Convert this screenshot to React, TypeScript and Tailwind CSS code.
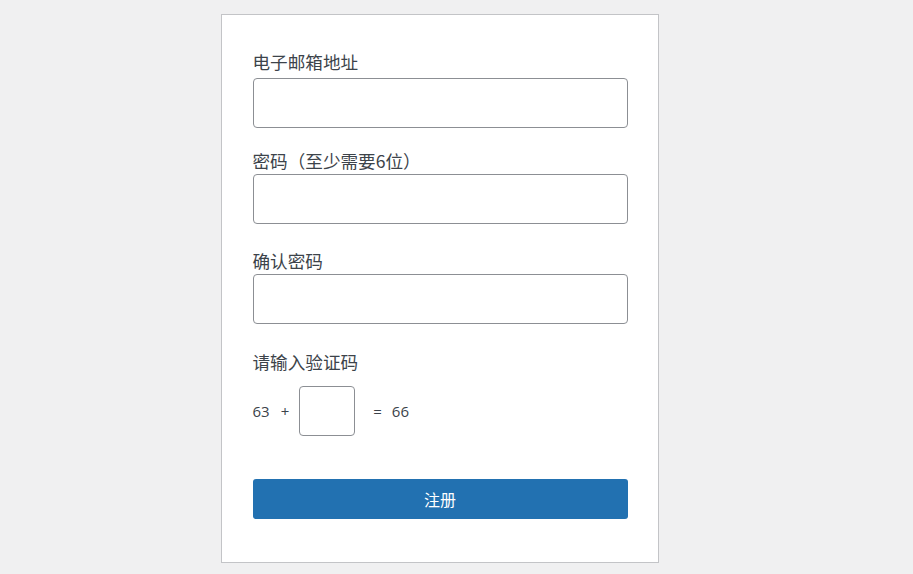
import React from "react";

const labelCls =
  "block text-[17.6px] leading-[27px] text-[#3c434a] font-['Noto_Sans_CJK_SC','Noto_Sans',sans-serif]";
const inputCls =
  "block w-[375px] h-[50px] rounded-[4px] border border-[#8c8f94] bg-white";

export default function App() {
  return (
    <div className="min-h-[574px] w-full bg-[#f0f0f1] flex justify-center pr-[34px] pt-[14px] font-['Noto_Sans','Noto_Sans_CJK_SC',sans-serif]">
      <div className="w-[438px] h-[549px] bg-white border border-[#c3c4c7] pl-[31px] pt-[33px] flex flex-col">
        <label className={labelCls}>电子邮箱地址</label>
        <input type="email" className={`${inputCls} mt-[3px]`} />

        <label className={`${labelCls} mt-[19px]`}>密码（至少需要6位）</label>
        <input type="password" className={`${inputCls} mt-0`} />

        <label className={`${labelCls} mt-[23px]`}>确认密码</label>
        <input type="password" className={`${inputCls} mt-0`} />

        <label className={`${labelCls} mt-[24px]`}>请输入验证码</label>
        <div className="mt-[11px] flex items-center text-[15px] text-[#3c434a] font-['Open_Sans','Noto_Sans',sans-serif]">
          <span>63</span>
          <span className="ml-[11px]">+</span>
          <input type="text" className="ml-[10px] w-[56px] h-[50px] rounded-[4px] border border-[#8c8f94] bg-white" />
          <span className="ml-[18px]">=</span>
          <span className="ml-[10px]">66</span>
        </div>

        <button className="mt-[43px] w-[375px] h-[40px] rounded-[3px] bg-[#2271b1] text-white text-[16px] font-['Noto_Sans_CJK_SC',sans-serif]">
          注册
        </button>
      </div>
    </div>
  );
}
